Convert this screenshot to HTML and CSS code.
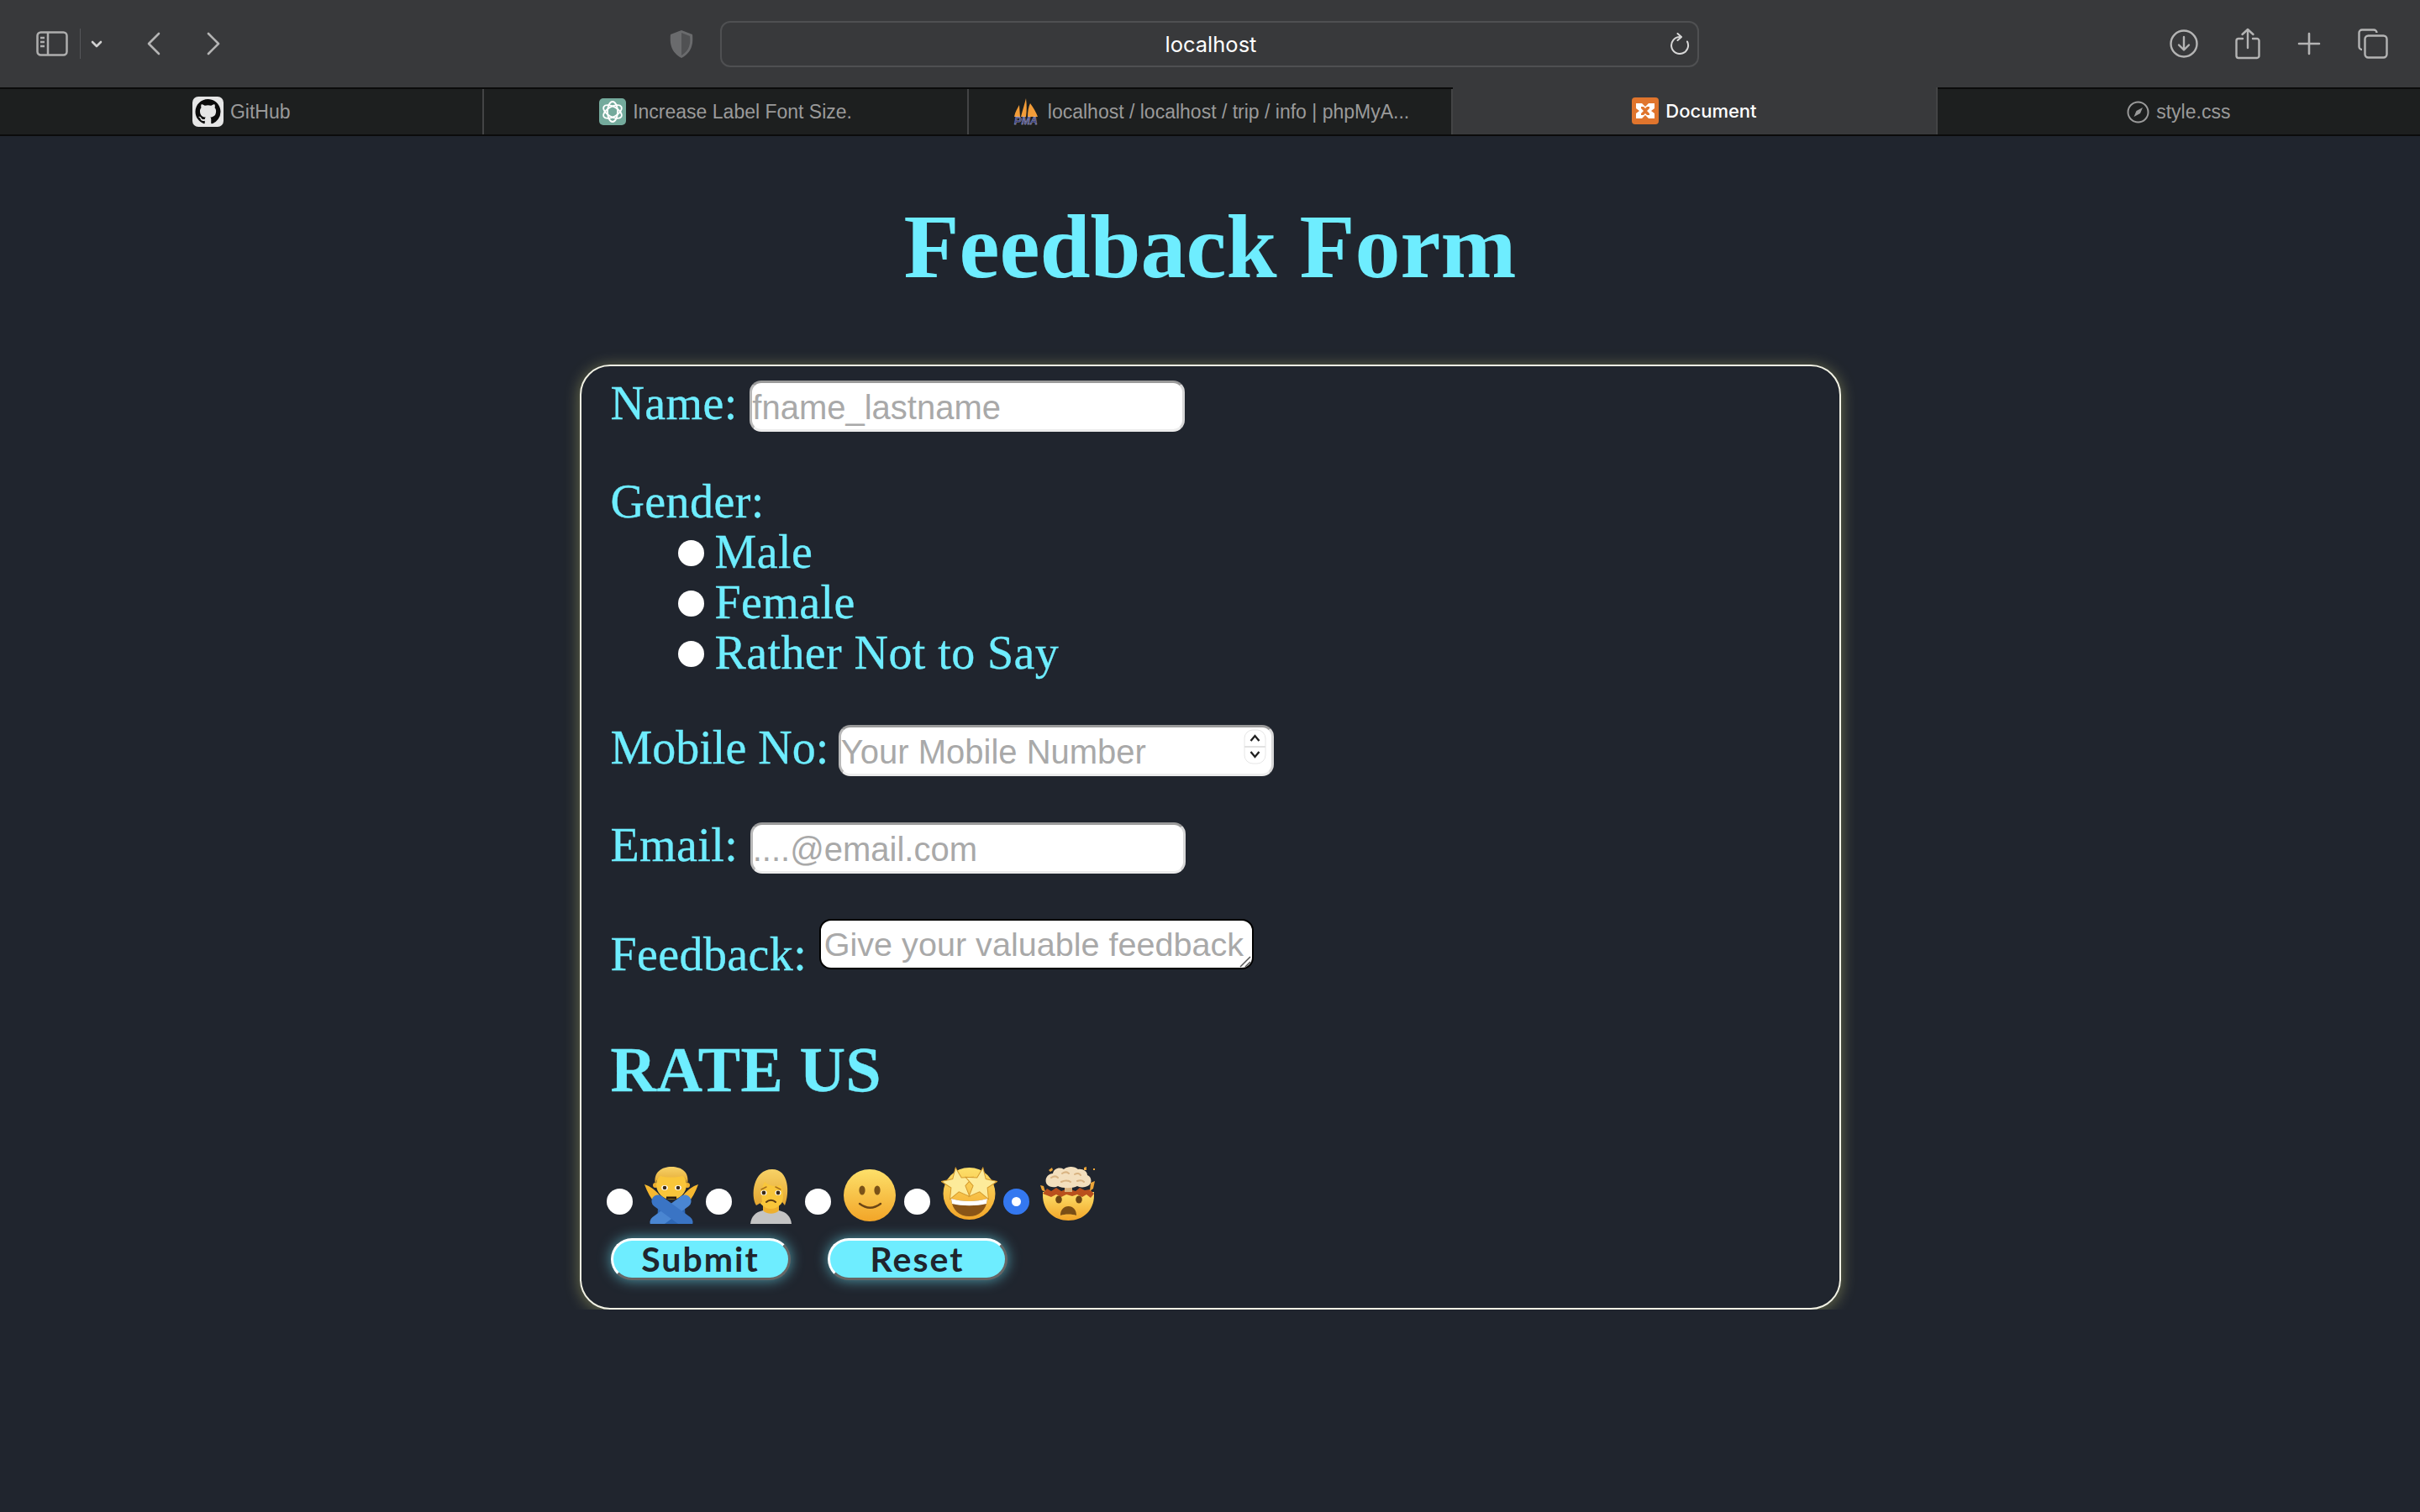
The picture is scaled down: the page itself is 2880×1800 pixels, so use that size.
FILE: index.html
```html
<!DOCTYPE html>
<html lang="en">
<head>
    <meta charset="UTF-8" />
    <title>Document</title>
    <link rel="stylesheet" href="styles.css">
</head>
<body>
    <div class="toolbar">
        <div class="tools-left">
            <svg class="ic-sidebar" width="38" height="30" viewBox="0 0 38 30" fill="none" stroke="#aeaeae" stroke-width="2.5"><rect x="1.5" y="1.5" width="35" height="27" rx="4"/><path d="M14 2v26M5 8h5M5 13h5M5 18h5"/></svg>
            <span class="tool-sep"></span>
            <svg class="ic-caret" width="14" height="9" viewBox="0 0 14 9" fill="none" stroke="#d0d0d0" stroke-width="2.6" stroke-linecap="round" stroke-linejoin="round"><path d="M2 2l5 5 5-5"/></svg>
            <svg class="ic-back" width="17" height="28" viewBox="0 0 17 28" fill="none" stroke="#b4b4b4" stroke-width="2.6" stroke-linecap="round" stroke-linejoin="round"><path d="M15 2L3 14l12 12"/></svg>
            <svg class="ic-forward" width="17" height="28" viewBox="0 0 17 28" fill="none" stroke="#b4b4b4" stroke-width="2.6" stroke-linecap="round" stroke-linejoin="round"><path d="M2 2l12 12L2 26"/></svg>
        </div>
        <svg class="ic-shield" width="28" height="33" viewBox="0 0 28 33"><path d="M14 0l13 5c1 10 0 21-13 28C1 26 0 15 1 5z" fill="#6a6b6d"/><path d="M14 3l10 4c1 8 0 17-10 23z" fill="#505153"/></svg>
        <div class="urlbar">
            <span class="url-text">localhost</span>
            <svg class="ic-reload" width="24" height="26" viewBox="0 0 24 26" fill="none" stroke="#d8d8d8" stroke-width="2" stroke-linecap="round" stroke-linejoin="round"><path d="M12 5a10 10 0 1 0 9 5.500"/><path d="M9.500 1l4.500 4-4.500 4"/></svg>
        </div>
        <div class="tools-right">
            <svg width="34" height="34" viewBox="0 0 34 34" fill="none" stroke="#b4b4b4" stroke-width="2.4" stroke-linecap="round" stroke-linejoin="round"><circle cx="17" cy="17" r="15.500"/><path d="M17 9v15M11 18.500l6 6 6-6"/></svg>
            <svg width="30" height="38" viewBox="0 0 30 38" fill="none" stroke="#b4b4b4" stroke-width="2.4" stroke-linecap="round" stroke-linejoin="round"><path d="M9 13H4a2.500 2.500 0 0 0-2.500 2.500v18A2.500 2.500 0 0 0 4 36h22a2.500 2.500 0 0 0 2.500-2.500v-18A2.500 2.500 0 0 0 26 13h-5M15 24V2M8.500 8L15 2l6.500 6"/></svg>
            <svg width="28" height="28" viewBox="0 0 28 28" fill="none" stroke="#b4b4b4" stroke-width="2.6" stroke-linecap="round"><path d="M14 2v24M2 14h24"/></svg>
            <svg width="36" height="36" viewBox="0 0 36 36" fill="none" stroke="#b4b4b4" stroke-width="2.4" stroke-linejoin="round"><path d="M5 25a3.500 3.500 0 0 1-3.500-3.500V5A3.500 3.500 0 0 1 5 1.500h14A3.500 3.500 0 0 1 22.500 5"/><rect x="8.500" y="8.500" width="26" height="26" rx="4"/></svg>
        </div>
    </div>

    <div class="tabs">
        <div class="tab">
            <svg class="fav" width="37" height="36" viewBox="0 0 37 36"><rect width="37" height="36" rx="7" fill="#e6e6e6"/><path transform="translate(3.500 3) scale(1.875)" d="M8 0C3.58 0 0 3.58 0 8c0 3.54 2.29 6.53 5.47 7.59.4.07.55-.17.55-.38 0-.19-.01-.82-.01-1.49-2.01.37-2.53-.49-2.69-.94-.09-.23-.48-.94-.82-1.13-.28-.15-.68-.52-.01-.53.63-.01 1.08.58 1.23.82.72 1.21 1.87.87 2.33.66.07-.52.28-.87.51-1.07-1.78-.2-3.64-.89-3.64-3.95 0-.87.31-1.59.82-2.15-.08-.2-.36-1.02.08-2.12 0 0 .67-.21 2.2.82.64-.18 1.32-.27 2-.27.68 0 1.36.09 2 .27 1.53-1.04 2.2-.82 2.2-.82.44 1.1.16 1.92.08 2.12.51.56.82 1.27.82 2.15 0 3.07-1.87 3.75-3.65 3.95.29.25.54.73.54 1.48 0 1.07-.01 1.93-.01 2.2 0 .21.15.46.55.38A8.013 8.013 0 0016 8c0-4.42-3.58-8-8-8z" fill="#0c0c0c"/></svg>
            <span>GitHub</span>
        </div>
        <div class="tab">
            <svg class="fav" width="32" height="32" viewBox="0 0 32 32"><rect width="32" height="32" rx="5" fill="#74aa9c"/><g fill="none" stroke="#fff" stroke-width="1.800"><ellipse cx="16" cy="16" rx="6" ry="12"/><ellipse cx="16" cy="16" rx="6" ry="12" transform="rotate(60 16 16)"/><ellipse cx="16" cy="16" rx="6" ry="12" transform="rotate(120 16 16)"/></g></svg>
            <span>Increase Label Font Size.</span>
        </div>
        <div class="tab">
            <svg class="fav" width="36" height="38" viewBox="0 -3 36 38"><path d="M4 22c1-6 4-10 6-14l1 14zM12 22c2-8 4-14 6-22 1 8 1 15 0 22zM20 22c0-6 1-12 3-16 4 5 7 11 9 16z" fill="#f29c38"/><text x="18" y="31" class="pma">PMA</text></svg>
            <span>localhost / localhost / trip / info | phpMyA...</span>
        </div>
        <div class="tab tab-active">
            <svg class="fav" width="32" height="32" viewBox="0 0 32 32"><rect width="32" height="32" rx="4" fill="#e0752d"/><path d="M5 7h7l4 4 4-4h7v6l-4 3 4 3v6h-7l-4-4-4 4H5v-6l4-3-4-3z" fill="#fff"/><path d="M11 11h3l2 2 2-2h3v2l-3 3 3 3v2h-3l-2-2-2 2h-3v-2l3-3-3-3z" fill="#e0752d"/></svg>
            <span>Document</span>
        </div>
        <div class="tab">
            <svg class="fav" width="27" height="27" viewBox="0 0 27 27" fill="none" stroke="#9a9a9a" stroke-width="2"><circle cx="13.500" cy="13.500" r="12"/><path d="M19 8l-7.500 4-3 7 7.500-4z" fill="#9a9a9a" stroke="none"/></svg>
            <span>style.css</span>
        </div>
    </div>

    <h1 class="title">Feedback Form</h1>

    <form class="feedback-form">
        <div class="row">
            <label for="name">Name:</label>
            <input class="field" type="text" id="name" placeholder="fname_lastname" />
        </div>

        <div class="gender">
            <div class="line">Gender:</div>
            <label class="option"><input class="radio" type="radio" name="gender" /> Male</label>
            <label class="option"><input class="radio" type="radio" name="gender" /> Female</label>
            <label class="option"><input class="radio" type="radio" name="gender" /> Rather Not to Say</label>
        </div>

        <div class="row row-mobile">
            <label for="mobile">Mobile No:</label>
            <div class="field-wrap">
                <input class="field" type="number" id="mobile" placeholder="Your Mobile Number" />
                <svg class="spinner" width="27" height="42" viewBox="0 0 27 42" fill="none"><rect x="1" y="1" width="25" height="40" rx="10" fill="#fff" stroke="#e6e6e6"/><path d="M1 21h25" stroke="#e2e2e2" stroke-width="2"/><path d="M8.500 14l5-6 5 6M8.500 27l5 6 5-6" stroke="#222" stroke-width="2.400"/></svg>
            </div>
        </div>

        <div class="row row-email">
            <label for="email">Email:</label>
            <input class="field" type="email" id="email" placeholder="....@email.com" />
        </div>

        <div class="row row-feedback">
            <label class="feedback-label" for="feedback">Feedback:</label>
            <div class="field-wrap">
                <textarea class="field-area" id="feedback" wrap="off" placeholder="Give your valuable feedback"></textarea>
                <svg class="grip" width="14" height="14" viewBox="0 0 14 14" fill="none" stroke="#555" stroke-width="1.500"><path d="M1 13L13 1M7 13l6-6"/></svg>
            </div>
        </div>

        <h2 class="rate-title">RATE US</h2>

        <div class="rating">
            <input class="radio" type="radio" name="rate" />
            <span class="emoji">
                <svg width="64" height="68" viewBox="0 0 64 68">
                    <defs>
                        <linearGradient id="face" x1="0" y1="0" x2="0" y2="1"><stop offset="0" stop-color="#fde06a"/><stop offset="1" stop-color="#f2a528"/></linearGradient>
                        <linearGradient id="hair" x1="0" y1="0" x2="0" y2="1"><stop offset="0" stop-color="#f7d267"/><stop offset="1" stop-color="#e3a52f"/></linearGradient>
                        <clipPath id="cut"><rect width="64" height="68"/></clipPath>
                    </defs>
                    <path d="M0 21c7 2 13 7 18 13l3 6-7 6C8 38 3 30 0 21zM64 21c-7 2-13 7-18 13l-3 6 7 6c6-8 11-16 14-25z" fill="#f6b830"/>
                    <circle cx="13" cy="22" r="3" fill="#eeb02f"/><circle cx="51" cy="22" r="3" fill="#eeb02f"/>
                    <ellipse cx="32" cy="21" rx="18" ry="18" fill="#f9c63a"/>
                    <path d="M13 21C10 6 21 0 32 0c12 0 22 6 19 21-1-5-3-9-6-10-8 2-19 2-26 0-3 2-5 5-6 10z" fill="url(#hair)"/>
                    <ellipse cx="24" cy="25" rx="3.800" ry="3" fill="#fff"/><ellipse cx="40" cy="25" rx="3.800" ry="3" fill="#fff"/>
                    <circle cx="24" cy="25" r="2.300" fill="#3c2a14"/><circle cx="40" cy="25" r="2.300" fill="#3c2a14"/>
                    <path d="M26 37h12" stroke="#2a1c0c" stroke-width="3"/>
                    <g clip-path="url(#cut)" stroke-linecap="round">
                        <path d="M15 70l1-22 32 0 1 22z" fill="#2e67b5"/>
                        <path d="M48 41L14 66" stroke="#4a86d2" stroke-width="15"/>
                        <path d="M16 41l34 25" stroke="#3a74c4" stroke-width="15"/>
                    </g>
                </svg>
            </span>
            <input class="radio" type="radio" name="rate" />
            <span class="emoji">
                <svg width="49" height="68" viewBox="0 -3 49 68">
                    <path d="M0 65c1-9 6-14 15-16h19c9 2 14 7 15 16z" fill="#c4c4c4"/>
                    <path d="M15 40h19v9c-4 5-15 5-19 0z" fill="#eeb02f"/>
                    <ellipse cx="24.500" cy="27" rx="17" ry="20" fill="#f9c63a"/>
                    <path d="M7 43C0 32 3 0 26 0c20 0 21 28 15 43l-3-4c2-8 1-15-2-20-6 2-14 1-19-4-4 7-4 16-3 24z" fill="url(#hair)"/>
                    <path d="M13 24l6-3M36 24l-6-3" stroke="#a8701c" stroke-width="1.500" stroke-linecap="round"/>
                    <ellipse cx="16" cy="28" rx="3.600" ry="3" fill="#fff"/><ellipse cx="33" cy="28" rx="3.600" ry="3" fill="#fff"/>
                    <circle cx="16" cy="28" r="2.400" fill="#3c2a14"/><circle cx="33" cy="28" r="2.400" fill="#3c2a14"/>
                    <path d="M19 39c3-3 8-3 11 0" fill="none" stroke="#5e3d12" stroke-width="2" stroke-linecap="round"/>
                </svg>
            </span>
            <input class="radio" type="radio" name="rate" />
            <span class="emoji">
                <svg width="62" height="68" viewBox="0 -3 62 68">
                    <circle cx="31" cy="31" r="31" fill="url(#face)"/>
                    <ellipse cx="22" cy="25" rx="3.600" ry="5.600" fill="#7a5218"/><ellipse cx="40" cy="25" rx="3.600" ry="5.600" fill="#7a5218"/>
                    <path d="M19 41c8 6 17 6 25 0" fill="none" stroke="#6b4515" stroke-width="2.400" stroke-linecap="round"/>
                </svg>
            </span>
            <input class="radio" type="radio" name="rate" />
            <span class="emoji">
                <svg width="67" height="68" viewBox="0 -1 67 68">
                    <circle cx="33.500" cy="31" r="31" fill="url(#face)"/>
                    <path d="M12 37c13 4 30 4 43 0-1 14-10 21-21.500 21S13 51 12 37z" fill="#8a5517"/>
                    <path d="M12 37c13 4 30 4 43 0l-1 6c-12 3-29 3-41 0z" fill="#fff"/>
                    <g fill="#fdeb9a" stroke="#d59a2c" stroke-width="1">
                        <path transform="rotate(-8 20 20)" d="M20 0L25.300 12.700 39 13.800 28.600 22.800 31.800 36.200 20 29 8.200 36.200 11.400 22.800 1 13.800 14.700 12.700z"/>
                        <path transform="translate(27 0) rotate(8 20 20)" d="M20 0L25.300 12.700 39 13.800 28.600 22.800 31.800 36.200 20 29 8.200 36.200 11.400 22.800 1 13.800 14.700 12.700z"/>
                    </g>
                </svg>
            </span>
            <input class="radio" type="radio" name="rate" checked />
            <span class="emoji">
                <svg width="67" height="68" viewBox="0 0 67 68">
                    <path d="M3 30h61v4c0 18-13 30-30.500 30S3 52 3 34z" fill="url(#face)"/>
                    <path d="M3 32l5-6 5 3 6-4 6 4 8-3 9 3 5-4 6 3 6-1 5 5-4 5-5-4-5 3-6-3-6 2-7-2-6 3-6-3-6 3z" fill="#b9501d"/>
                    <path d="M29 24h9v6h-9z" fill="#d9b07a"/>
                    <path d="M8 21C4 15 9 8 15 8c1-6 8-8 13-5 4-4 13-4 17 0 5-1 11 2 11 7 5 2 6 8 2 12-4 3-11 3-14 1-5 3-18 3-23 0-3 2-10 2-13-2z" fill="#f3dfbd"/>
                    <path d="M13 13c3-2 6-2 8 0M26 8c3-2 6-2 8 0M41 9c3-2 6-1 7 1M25 18c4-2 8-2 11 0M44 17c3-1 6-1 8 1" fill="none" stroke="#d9b483" stroke-width="2" stroke-linecap="round"/>
                    <path d="M10 4l4-3 1 3-3 2zM52 1l3-1v4h-3zM63 2l2 0 0 2-2 0zM0 22l4 1 2 7-4-2zM60 19l5-2-2 9-4 3z" fill="#eca538"/>
                    <ellipse cx="22" cy="39" rx="3.800" ry="4.600" fill="#6b4515"/><ellipse cx="46" cy="39" rx="3.800" ry="4.600" fill="#6b4515"/>
                    <path d="M24 58c0-7 4-11 9.500-11S43 51 43 58c-5-2-14-2-19 0z" fill="#7a4e16"/>
                </svg>
            </span>
        </div>

        <div class="buttons">
            <button class="btn" type="submit">Submit</button>
            <button class="btn" type="reset">Reset</button>
        </div>
    </form>
</body>
</html>
```

FILE: styles.css
```css
body {
    margin: 0;
    background-color: #20252e;
    font-family: "Liberation Serif", serif;
    color: #6eedff;
}

/* browser chrome */
.toolbar {
    height: 104px;
    background-color: #38393b;
    display: flex;
    align-items: center;
    box-sizing: border-box;
    padding: 0 38px 0 43px;
}
.tools-left {
    display: flex;
    align-items: center;
    width: 754px;
}
.tool-sep {
    width: 1px;
    height: 36px;
    background-color: #55565a;
    margin: 0 12px 0 14px;
}
.ic-back {
    margin-left: 52px;
}
.ic-forward {
    margin-left: 55px;
}
.ic-shield {
    flex-shrink: 0;
}
.urlbar {
    width: 1165px;
    height: 55px;
    box-sizing: border-box;
    margin-left: 32px;
    border: 2px solid #4f5052;
    border-radius: 12px;
    display: flex;
    align-items: center;
    justify-content: center;
    position: relative;
}
.url-text {
    font-family: "Inter", sans-serif;
    font-size: 25.5px;
    color: #fff;
    margin-left: 3px;
}
.ic-reload {
    position: absolute;
    right: 9px;
    top: 12px;
}
.tools-right {
    margin-left: auto;
    display: flex;
    align-items: center;
    gap: 44px;
}
.tabs {
    display: flex;
    height: 58px;
    box-sizing: border-box;
    border-top: 2px solid #0b0b0b;
    border-bottom: 2px solid #0b0b0b;
    background-color: #1d1f1f;
}
.tab {
    flex: 1;
    display: flex;
    align-items: center;
    justify-content: center;
    gap: 8px;
    border-right: 2px solid #434445;
    font-family: "Liberation Sans", sans-serif;
    font-size: 23px;
    color: #9a9a9a;
}
.tab:last-child {
    border-right: none;
}
.tab-active {
    background-color: #38393b;
    color: #fff;
    font-family: "Inter", sans-serif;
    font-size: 22px;
    font-weight: 500;
    margin-top: -2px;
}
.pma {
    font: italic bold 12.5px "Liberation Sans", sans-serif;
    fill: #3f4384;
    stroke: #d8d8e8;
    stroke-width: 0.3px;
    text-anchor: middle;
}

/* page */
.title {
    margin: 0;
    padding-top: 76px;
    height: 192px;
    box-sizing: border-box;
    text-align: center;
    font-size: 108px;
    line-height: 112px;
    font-weight: bold;
}
.feedback-form {
    width: 1501px;
    margin: 80px auto 0;
    box-sizing: border-box;
    padding: 17px 35px 33px;
    border: 2px solid #f2f2e4;
    border-radius: 36px;
    box-shadow: 0 2px 18px rgba(240, 240, 130, 0.38);
    font-size: 56px;
    line-height: 60px;
    letter-spacing: 0.4px;
    -webkit-text-stroke: 0.3px #6eedff;
}
.row {
    display: flex;
    align-items: flex-start;
    gap: 14.5px;
}
.row label {
    margin-top: -3px;
}
.row-mobile {
    margin-top: 56px;
}
.row-mobile label {
    letter-spacing: 0;
    margin-right: -3px;
}
.row-email {
    margin-top: 55px;
}
.row-feedback {
    margin-top: 54px;
}
.gender {
    margin-top: 53px;
}
.option {
    display: flex;
    align-items: center;
    gap: 13px;
    padding-left: 80px;
}
.radio {
    appearance: none;
    width: 31px;
    height: 31px;
    margin: 2px 0 0;
    border-radius: 50%;
    background-color: #fff;
    flex-shrink: 0;
}
.radio:checked {
    border: 10px solid #3478f0;
    box-sizing: border-box;
}
.field {
    display: block;
    width: 518px;
    height: 61px;
    box-sizing: border-box;
    padding: 4px 0 0 0;
    border-width: 3px;
    border-style: solid;
    border-color: #9a9a9a #d8d8d8 #ececec #b8b8b8;
    border-radius: 14px;
    background-color: #fff;
    font-family: "Liberation Sans", sans-serif;
    font-size: 40px;
    outline: none;
    -webkit-text-stroke: 0;
}
.field::placeholder,
.field-area::placeholder {
    color: #a9a9a9;
}
.field::-webkit-inner-spin-button {
    appearance: none;
}
.field-wrap {
    position: relative;
    height: 61px;
}
.spinner {
    position: absolute;
    right: 9px;
    top: 5px;
}
.grip {
    position: absolute;
    right: 3px;
    bottom: 3px;
}
.row .feedback-label {
    margin-top: 12px;
}
.field-area {
    display: block;
    width: 517px;
    height: 60px;
    box-sizing: border-box;
    padding: 5px 4px 4px;
    border: 2px solid #000;
    border-radius: 14px;
    background-color: #fff;
    font-family: "Liberation Sans", sans-serif;
    font-size: 39.6px;
    line-height: 46px;
    outline: none;
    overflow: hidden;
    resize: none;
    -webkit-text-stroke: 0;
}
.rate-title {
    margin: 68px 0 0;
    font-size: 75.5px;
    line-height: 80px;
    font-weight: bold;
}
.rating {
    display: flex;
    align-items: center;
    margin: 75px 0 0 -5px;
    height: 68px;
}
.rating .radio {
    margin-top: 15px;
}
.emoji {
    width: 87px;
    height: 68px;
    box-sizing: border-box;
    padding-left: 6px;
    display: flex;
    justify-content: center;
}
.buttons {
    display: flex;
    gap: 44px;
    margin-top: 17px;
}
.btn {
    width: 214px;
    height: 50px;
    box-sizing: border-box;
    padding: 0;
    border-width: 3px;
    border-style: solid;
    border-color: #fff #666 #666 #fff;
    border-radius: 25px;
    background-color: #6eedff;
    box-shadow: 0 0 16px rgba(110, 237, 255, 0.6);
    color: #20252e;
    font-family: "Lato", sans-serif;
    font-size: 41px;
    font-weight: 700;
    line-height: 40px;
    letter-spacing: 2px;
    -webkit-text-stroke: 0;
}
```
